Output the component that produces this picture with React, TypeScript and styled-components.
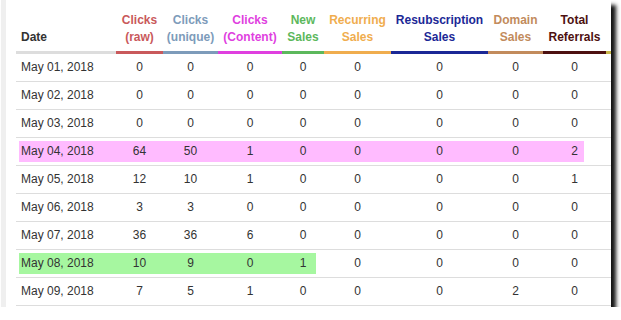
import React from 'react'
import styled, { createGlobalStyle } from 'styled-components'

interface Column {
  label: string[]
  color: string
  width: number
  left?: boolean
}

interface Mark {
  color: string
  // index of last highlighted column and how far into it the mark reaches
  until: number
  end: number
}

interface Row {
  date: string
  values: number[]
  mark?: Mark
}

const GlobalStyle = createGlobalStyle`
  html, body {
    margin: 0;
    background: #fff;
    font-family: "Liberation Sans", Arial, Helvetica, sans-serif;
  }
`

const columns: Column[] = [
  { label: ['Date'], color: '#333', width: 100, left: true },
  { label: ['Clicks', '(raw)'], color: '#c9595b', width: 47 },
  { label: ['Clicks', '(unique)'], color: '#7d9bba', width: 55 },
  { label: ['Clicks', '(Content)'], color: '#df3fdf', width: 64 },
  { label: ['New', 'Sales'], color: '#5cb85c', width: 42 },
  { label: ['Recurring', 'Sales'], color: '#f0ad4e', width: 67 },
  { label: ['Resubscription', 'Sales'], color: '#1b2896', width: 97 },
  { label: ['Domain', 'Sales'], color: '#c28b5c', width: 55 },
  { label: ['Total', 'Referrals'], color: '#4d1010', width: 63 },
  { label: ['', ''], color: '#cbb94c', width: 50 },
]

const pink: Mark = { color: '#ffbbff', until: 8, end: 41 }
const green: Mark = { color: '#a6f7a0', until: 4, end: 34 }

const rows: Row[] = [
  { date: 'May 01, 2018', values: [0, 0, 0, 0, 0, 0, 0, 0] },
  { date: 'May 02, 2018', values: [0, 0, 0, 0, 0, 0, 0, 0] },
  { date: 'May 03, 2018', values: [0, 0, 0, 0, 0, 0, 0, 0] },
  { date: 'May 04, 2018', values: [64, 50, 1, 0, 0, 0, 0, 2], mark: pink },
  { date: 'May 05, 2018', values: [12, 10, 1, 0, 0, 0, 0, 1] },
  { date: 'May 06, 2018', values: [3, 3, 0, 0, 0, 0, 0, 0] },
  { date: 'May 07, 2018', values: [36, 36, 6, 0, 0, 0, 0, 0] },
  { date: 'May 08, 2018', values: [10, 9, 0, 1, 0, 0, 0, 0], mark: green },
  { date: 'May 09, 2018', values: [7, 5, 1, 0, 0, 0, 2, 0] },
]

const Page = styled.div`
  padding-left: 1px;
`

const Card = styled.div`
  width: 595px;
  height: 302px;
  padding: 5px 0 0 10px;
  background: #fff;
  border-left: 5px solid #efefef;
  box-shadow: 5px 5px 4px rgba(0, 0, 0, 0.92);
  overflow: hidden;
`

const Table = styled.table`
  table-layout: fixed;
  width: 640px;
  border-collapse: separate;
  border-spacing: 0;
  font-size: 12px;
`

const Head = styled.th<{ $color: string; $left?: boolean }>`
  padding: 7px 2px 5px;
  line-height: 17px;
  font-weight: bold;
  vertical-align: bottom;
  text-align: ${p => (p.$left ? 'left' : 'center')};
  padding-left: ${p => (p.$left ? '5px' : '2px')};
  color: ${p => p.$color};
  border-bottom: 3px solid ${p => (p.$left ? '#dddddd' : p.$color)};
  white-space: nowrap;
`

const Cell = styled.td<{ $left?: boolean; $hl?: string; $from?: number; $size?: string }>`
  padding: 0 ${p => (p.$left ? '5px' : '2px')};
  line-height: 27px;
  color: #333;
  text-align: ${p => (p.$left ? 'left' : 'center')};
  border-bottom: 1px solid #dddddd;
  white-space: nowrap;
  ${p =>
    p.$hl &&
    `
    background-image: linear-gradient(${p.$hl}, ${p.$hl});
    background-repeat: no-repeat;
    background-origin: border-box;
    background-position: ${p.$from ?? 0}px 3px;
    background-size: ${p.$size};
  `}
`

const markFor = (mark: Mark | undefined, col: number) => {
  if (!mark || col > mark.until) return {}
  if (col === 0) return { $hl: mark.color, $from: 3, $size: 'calc(100% - 3px) 21px' }
  if (col === mark.until) return { $hl: mark.color, $from: 0, $size: `${mark.end}px 21px` }
  return { $hl: mark.color, $from: 0, $size: '100% 21px' }
}

export default function App() {
  return (
    <Page>
      <GlobalStyle />
      <Card>
        <Table>
          <colgroup>
            {columns.map((c, i) => (
              <col key={i} style={{ width: c.width }} />
            ))}
          </colgroup>
          <thead>
            <tr>
              {columns.map((c, i) => (
                <Head key={i} $color={c.color} $left={c.left}>
                  {c.label.length > 1 ? (
                    <>
                      {c.label[0] || '\u00a0'}
                      <br />
                      {c.label[1] || '\u00a0'}
                    </>
                  ) : (
                    c.label[0]
                  )}
                </Head>
              ))}
            </tr>
          </thead>
          <tbody>
            {rows.map(r => (
              <tr key={r.date}>
                <Cell $left {...markFor(r.mark, 0)}>
                  {r.date}
                </Cell>
                {r.values.map((v, i) => (
                  <Cell key={i} {...markFor(r.mark, i + 1)}>
                    {v}
                  </Cell>
                ))}
                <Cell />
              </tr>
            ))}
          </tbody>
        </Table>
      </Card>
    </Page>
  )
}
